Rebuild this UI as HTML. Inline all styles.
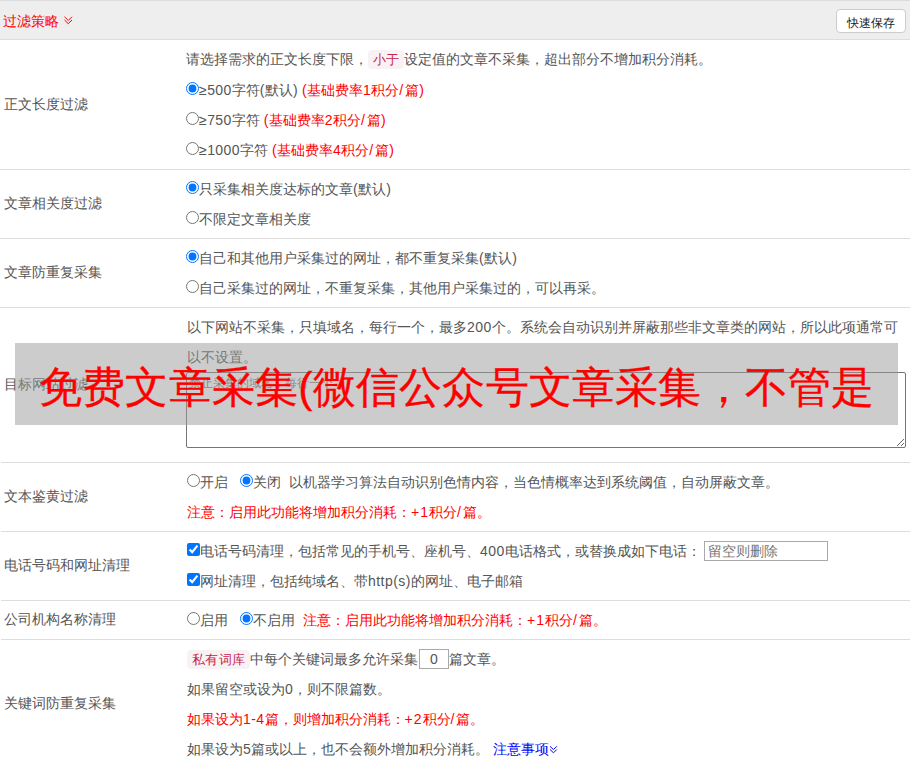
<!DOCTYPE html>
<html><head><meta charset="utf-8">
<style>
*{box-sizing:border-box}
html,body{margin:0;padding:0;background:#fff}
body{font-family:"Liberation Sans",sans-serif;font-size:14px;color:#555;width:912px;height:768px;overflow:hidden;position:relative}
.hdr{position:absolute;left:0;top:0;width:910px;height:40px;background:#eee;border-top:1px solid #ddd;border-bottom:1px solid #ddd}
.hdr .t{position:absolute;left:3px;top:11px;color:#f00;font-size:14px;line-height:18px}
.hdr .btn{position:absolute;left:836px;top:8px;width:70px;height:24px;background:#fff;border:1px solid #ccc;border-radius:4px;font-size:12px;color:#222;text-align:center;line-height:27px}
.row{position:absolute;left:0;width:910px;border-bottom:1px solid #ddd}
.lab{position:absolute;left:4px;top:0;bottom:0;display:flex;align-items:center}
.b .lab{left:3px}
.cnt{position:absolute;left:186px;top:4px;right:0}
.ln{height:30px;line-height:30px;white-space:nowrap}
.red{color:#f00}
input[type=radio],input[type=checkbox]{margin:0;vertical-align:0}
code{font-family:"Liberation Mono",monospace;color:#c7254e;background:#f9f2f4;padding:0 4.5px;border-radius:4px;font-size:12.6px;letter-spacing:0.5px;display:inline-block;height:19px;line-height:22px;vertical-align:top;position:relative;top:6px}
textarea{position:absolute;left:0;width:720px;height:76px;margin:0;font-family:"Liberation Sans",sans-serif;font-size:12px;padding:2px;border:1px solid #767676;border-radius:2px;resize:vertical}
textarea::placeholder{color:#757575}
.banner{position:absolute;left:15px;top:343px;width:883px;height:82px;background:rgba(153,153,153,0.5)}
.banner span{position:absolute;left:24px;top:19px;-webkit-text-stroke:0.3px #f00;font-size:43px;letter-spacing:0.2px;line-height:50px;color:#f00;white-space:nowrap}
.tx{font-family:"Liberation Sans",sans-serif;font-size:14px;color:#555;height:20px;border:1px solid #a9a9a9;border-radius:0;padding:0 3px;margin:0;vertical-align:top;position:relative;outline:none}
.tx::placeholder{color:#757575}
.l{letter-spacing:0.45px}
</style></head><body>
<div class="hdr"><span class="t">过滤策略</span><svg style="position:absolute;left:0;top:0" width="80" height="38"><path d="M64.5 15.8 L68.3 19.5 L72 15.8 M64.5 19 L68.3 22.7 L72 19" fill="none" stroke="#f00" stroke-width="1"/></svg><div class="btn">快速保存</div></div>

<div class="row" style="top:40px;height:130px">
 <div class="lab">正文长度过滤</div>
 <div class="cnt">
  <div class="ln" style="height:31px">请选择需求的正文长度下限，<code>小于</code>设定值的文章不采集，超出部分不增加积分消耗。</div>
  <div class="ln"><input type="radio" checked><span class="l">≥500</span>字符<span class="l">(</span>默认<span class="l">)</span> <span class="red"><span class="l">(</span>基础费率<span class="l">1</span>积分<span class="l" style="letter-spacing:2px">/</span>篇<span class="l">)</span></span></div>
  <div class="ln"><input type="radio"><span class="l">≥750</span>字符 <span class="red"><span class="l">(</span>基础费率<span class="l">2</span>积分<span class="l" style="letter-spacing:2px">/</span>篇<span class="l">)</span></span></div>
  <div class="ln"><input type="radio"><span class="l">≥1000</span>字符 <span class="red"><span class="l">(</span>基础费率<span class="l">4</span>积分<span class="l" style="letter-spacing:2px">/</span>篇<span class="l">)</span></span></div>
 </div>
</div>

<div class="row" style="top:170px;height:69px">
 <div class="lab">文章相关度过滤</div>
 <div class="cnt">
  <div class="ln"><input type="radio" checked>只采集相关度达标的文章<span class="l">(</span>默认<span class="l">)</span></div>
  <div class="ln"><input type="radio">不限定文章相关度</div>
 </div>
</div>

<div class="row" style="top:239px;height:69px">
 <div class="lab">文章防重复采集</div>
 <div class="cnt">
  <div class="ln"><input type="radio" checked>自己和其他用户采集过的网址，都不重复采集<span class="l">(</span>默认<span class="l">)</span></div>
  <div class="ln"><input type="radio">自己采集过的网址，不重复采集，其他用户采集过的，可以再采。</div>
 </div>
</div>

<div class="row b" style="top:308px;height:155px;left:1px;width:909px">
 <div class="lab">目标网站过滤</div>
 <div class="cnt" style="left:186px">
  <div class="ln">以下网站不采集，只填域名，每行一个，最多<span class="l">200</span>个。系统会自动识别并屏蔽那些非文章类的网站，所以此项通常可</div>
  <div class="ln">以不设置。</div>
  <textarea style="top:60px;left:-1px" placeholder="禁止采集的域名，每行一个"></textarea>
 </div>
</div>

<div class="row b" style="top:463px;height:69px;left:1px;width:909px">
 <div class="lab">文本鉴黄过滤</div>
 <div class="cnt" style="left:186px">
  <div class="ln"><input type="radio">开启<input type="radio" checked style="margin-left:12px">关闭<span style="margin-left:8px">以机器学习算法自动识别色情内容，当色情概率达到系统阈值，自动屏蔽文章。</span></div>
  <div class="ln red">注意：启用此功能将增加积分消耗：<span class="l" style="letter-spacing:1px">+1</span>积分<span class="l" style="letter-spacing:2px">/</span>篇。</div>
 </div>
</div>

<div class="row b" style="top:532px;height:69px;left:1px;width:909px">
 <div class="lab">电话号码和网址清理</div>
 <div class="cnt" style="left:186px">
  <div class="ln"><input type="checkbox" checked>电话号码清理，包括常见的手机号、座机号、<span class="l">400</span>电话格式，或替换成如下电话： <input type="text" class="tx" placeholder="留空则删除" style="width:124px;top:5px;margin-left:-0.6px"></div>
  <div class="ln"><input type="checkbox" checked>网址清理，包括纯域名、带<span class="l">http(s)</span>的网址、电子邮箱</div>
 </div>
</div>

<div class="row b" style="top:601px;height:39px;left:1px;width:909px">
 <div class="lab">公司机构名称清理</div>
 <div class="cnt" style="left:186px">
  <div class="ln"><input type="radio">启用<input type="radio" checked style="margin-left:12px">不启用<span class="red" style="margin-left:8px">注意：启用此功能将增加积分消耗：<span class="l" style="letter-spacing:1px">+1</span>积分<span class="l" style="letter-spacing:2px">/</span>篇。</span></div>
 </div>
</div>

<div class="row b" style="top:640px;height:140px;left:1px;width:909px">
 <div class="lab" style="bottom:12px">关键词防重复采集</div>
 <div class="cnt" style="left:186px">
  <div class="ln"><code>私有词库</code>中每个关键词最多允许采集<input type="text" class="tx" value="0" style="width:30px;top:5px;text-align:center;margin-left:1px">篇文章。</div>
  <div class="ln">如果留空或设为<span class="l">0</span>，则不限篇数。</div>
  <div class="ln red">如果设为<span class="l">1-4</span>篇，则增加积分消耗：<span class="l" style="letter-spacing:1px">+2</span>积分<span class="l" style="letter-spacing:2px">/</span>篇。</div>
  <div class="ln">如果设为<span class="l">5</span>篇或以上，也不会额外增加积分消耗。 <span style="color:#00f">注意事项</span><svg width="9" height="30" style="vertical-align:top"><path d="M1 12.3 L4.5 15.6 L7.8 12.3 M1 15.5 L4.5 18.8 L7.8 15.5" fill="none" stroke="#00f" stroke-width="1"/></svg></div>
 </div>
</div>

<div class="banner"><span>免费文章采集(微信公众号文章采集，不管是</span></div>
</body></html>
